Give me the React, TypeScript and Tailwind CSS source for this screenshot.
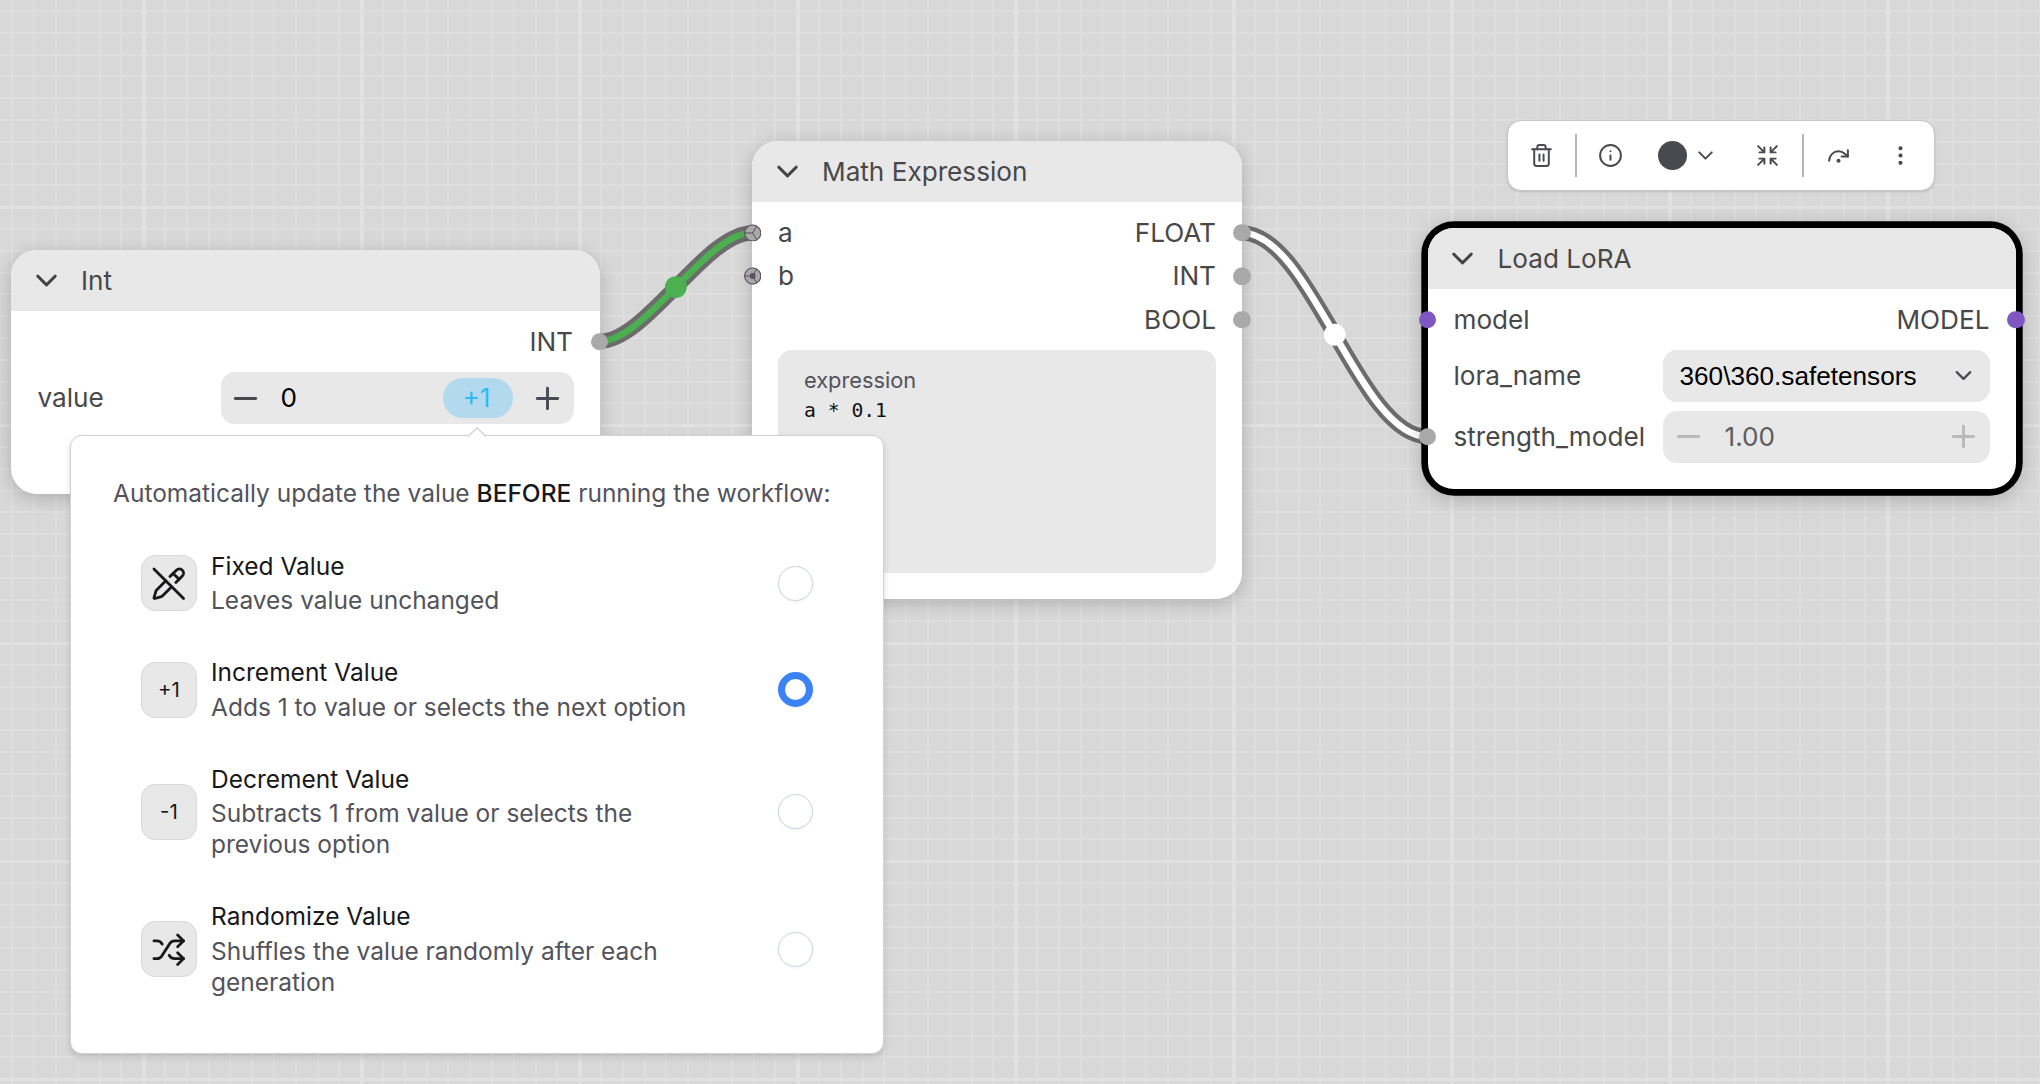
import React from 'react';
import {
  ChevronDown,
  EllipsisVertical,
  Info,
  Minus,
  PencilOff,
  Plus,
  RedoDot,
  Shrink,
  Shuffle,
  Trash2,
} from 'lucide-react';

interface Point {
  x: number;
  y: number;
}

interface SlotProps {
  side: 'left' | 'right';
  color?: string;
}

interface ModeOption {
  id: string;
  icon: React.ReactNode;
  title: string;
  description: React.ReactNode;
}

const GRID_STEP = 21.8;
const MAJOR_STEP = 218;

const range = (n: number) => Array.from({ length: n }, (_, i) => i);

const CanvasGrid: React.FC = () => (
  <svg className="absolute inset-0" width="2040" height="1084" shapeRendering="crispEdges">
    {range(95).map(i => (
      <rect key={`v${i}`} x={Math.round(11.4 + i * GRID_STEP)} y={0} width={2} height={1084} fill="#dedede" />
    ))}
    {range(51).map(i => (
      <rect key={`h${i}`} x={0} y={Math.round(10 + i * GRID_STEP)} width={2040} height={2} fill="#dedede" />
    ))}
    {range(9).map(i => (
      <rect key={`V${i}`} x={142 + i * MAJOR_STEP} y={0} width={4} height={1084} fill="#e1e1e1" />
    ))}
    {range(5).map(i => (
      <rect key={`H${i}`} x={0} y={206 + i * MAJOR_STEP} width={2040} height={3} fill="#e1e1e1" />
    ))}
  </svg>
);

const Link: React.FC<{ from: Point; to: Point; color: string }> = ({ from, to, color }) => {
  const offset = Math.hypot(to.x - from.x, to.y - from.y) * 0.25;
  const d = `M${from.x} ${from.y}C${from.x + offset} ${from.y} ${to.x - offset} ${to.y} ${to.x} ${to.y}`;
  return (
    <g fill="none">
      <path d={d} stroke="#6c6c6c" strokeWidth={15.2} />
      <path d={d} stroke={color} strokeWidth={6.6} />
      <circle cx={(from.x + to.x) / 2} cy={(from.y + to.y) / 2} r={10.9} fill={color} />
    </g>
  );
};

const Slot: React.FC<SlotProps> = ({ side, color = 'bg-[#a9a9a9]' }) => (
  <span
    className={`absolute top-1/2 size-[17.4px] -translate-y-1/2 rounded-full ${color} ${
      side === 'left' ? '-left-[8.7px]' : '-right-[8.7px]'
    }`}
  />
);

// Input that accepts several types, split into three sectors
const MultiSlot: React.FC<{ filled?: boolean }> = ({ filled }) => (
  <svg className="absolute top-1/2 -left-[8.5px] size-[17.4px] -translate-y-1/2" viewBox="0 0 17.4 17.4">
    <circle cx="8.7" cy="8.7" r="8.1" fill="#a9a9a9" stroke="#5b5165" strokeWidth="1.1" />
    <path d="M8.7 8.7H.8M8.7 8.7l3.9-6.8M8.7 8.7l3.9 6.8" stroke="#4a4452" strokeWidth="0.9" />
    {filled && <circle cx="8.7" cy="8.7" r="2.9" fill="#5b5165" />}
  </svg>
);

const NodeHeader: React.FC<{ title: string }> = ({ title }) => (
  <div className="flex h-[61px] items-center gap-[17.5px] rounded-t-[26px] bg-[#e8e8e8] pl-[17.5px]">
    <ChevronDown size={35} strokeWidth={2} className="text-[#444444]" />
    <span className="pt-px">{title}</span>
  </div>
);

const Toolbar: React.FC = () => (
  <div className="absolute top-[120px] left-[1507px] flex h-[71px] w-[428px] items-center rounded-[14px] border border-[#c6c6c6] bg-white pl-[21px] text-[#494a50] shadow-sm">
    <Trash2 size={25} strokeWidth={1.9} />
    <span className="ml-[21px] h-[43px] w-[2px] bg-[#b6b6b6]" />
    <Info size={25} strokeWidth={1.9} className="ml-[21px]" />
    <span className="ml-[35px] size-[28.5px] rounded-full bg-[#494a50]" />
    <ChevronDown size={25} strokeWidth={1.9} className="ml-[6px]" />
    <Shrink size={25} strokeWidth={1.9} className="ml-[37px]" />
    <span className="ml-[22px] h-[43px] w-[2px] bg-[#b6b6b6]" />
    <RedoDot size={25} strokeWidth={1.9} className="ml-[22.5px]" />
    <EllipsisVertical size={25} strokeWidth={2} className="ml-[36.5px]" />
  </div>
);

const IntNode: React.FC = () => (
  <div className="absolute top-[249.5px] left-[11px] h-[244px] w-[588.5px] rounded-[26px] bg-white shadow-[0_4px_18px_rgba(0,0,0,0.2)]">
    <NodeHeader title="Int" />
    <div className="relative mt-[9.5px] flex h-[43.6px] items-center justify-end pr-[26.5px]">
      <span className="pt-px">INT</span>
      <Slot side="right" />
    </div>
    <div className="mt-[8.5px] flex items-center justify-between pr-[25.5px] pl-[26.5px]">
      <span>value</span>
      <div className="flex h-[52px] w-[353.5px] items-center rounded-[14px] bg-[#e8e8e8] pl-[7.5px] text-black">
        <Minus size={35} strokeWidth={2} className="text-[#494a50]" />
        <span className="ml-[17.5px]">0</span>
        <span className="ml-auto flex h-10 w-[70px] items-center justify-center rounded-[20px] bg-[#b2d9ee] pr-[3px] text-[#31b9f4]">
          +1
        </span>
        <Plus size={35} strokeWidth={2} className="mr-[9px] ml-[17px] text-[#494a50]" />
      </div>
    </div>
  </div>
);

const MathNode: React.FC = () => (
  <div className="absolute top-[141px] left-[752px] h-[458px] w-[490px] rounded-[26px] bg-white shadow-[0_4px_18px_rgba(0,0,0,0.2)]">
    <NodeHeader title="Math Expression" />
    <div className="mt-[9px]">
      <div className="relative flex h-[43.6px] items-center justify-between pr-[26px] pl-[26px]">
        <MultiSlot />
        <span>a</span>
        <span>FLOAT</span>
        <Slot side="right" />
      </div>
      <div className="relative flex h-[43.6px] items-center justify-between pr-[26px] pl-[26px]">
        <MultiSlot filled />
        <span>b</span>
        <span>INT</span>
        <Slot side="right" />
      </div>
      <div className="relative flex h-[43.6px] items-center justify-end pr-[26px]">
        <span>BOOL</span>
        <Slot side="right" />
      </div>
    </div>
    <div className="mx-[26px] mt-[8px] h-[223px] rounded-[14px] bg-[#e8e8e8] px-[26px] pt-[16px]">
      <div className="text-[21.8px] leading-[28px] text-[#53535b]">expression</div>
      <div className="pt-[2px] font-['DejaVu_Sans_Mono',monospace] text-[19.7px] leading-[29px] text-[#111111]">
        a * 0.1
      </div>
    </div>
  </div>
);

const LoraNode: React.FC = () => (
  <div className="absolute top-[228px] left-[1427.5px] h-[261px] w-[588.5px] rounded-[26px] bg-white shadow-[0_0_0_6.7px_#000,0_4px_20px_6px_rgba(0,0,0,0.2)]">
    <NodeHeader title="Load LoRA" />
    <div className="relative mt-[9px] flex h-[43.6px] items-center justify-between pr-[26.5px] pl-[26px]">
      <Slot side="left" color="bg-[#7e57c2]" />
      <span>model</span>
      <span>MODEL</span>
      <Slot side="right" color="bg-[#7e57c2]" />
    </div>
    <div className="mt-[8px] flex items-center justify-between px-[26px]">
      <span>lora_name</span>
      <div className="flex h-[52px] w-[327.5px] items-center justify-between rounded-[14px] bg-[#e8e8e8] pr-[13px] pl-[17px] text-black">
        <span className="font-['Liberation_Sans',Arial,sans-serif]">360\360.safetensors</span>
        <ChevronDown size={27} strokeWidth={2} className="text-[#494a50]" />
      </div>
    </div>
    <div className="relative mt-[9px] flex items-center justify-between px-[26px]">
      <Slot side="left" />
      <span>strength_model</span>
      <div className="flex h-[52px] w-[327.5px] items-center rounded-[14px] bg-[#e8e8e8] pr-[9px] pl-[8px] text-[#5d5d5d]">
        <Minus size={35} strokeWidth={2} className="text-[#b9b9b9]" />
        <span className="ml-[19px]">1.00</span>
        <Plus size={35} strokeWidth={2} className="ml-auto text-[#b9b9b9]" />
      </div>
    </div>
  </div>
);

const OPTIONS: ModeOption[] = [
  {
    id: 'fixed',
    icon: <PencilOff size={35.5} strokeWidth={1.9} />,
    title: 'Fixed Value',
    description: 'Leaves value unchanged',
  },
  {
    id: 'increment',
    icon: '+1',
    title: 'Increment Value',
    description: 'Adds 1 to value or selects the next option',
  },
  {
    id: 'decrement',
    icon: '-1',
    title: 'Decrement Value',
    description: <>Subtracts 1 from value or selects the<br />previous option</>,
  },
  {
    id: 'randomize',
    icon: <Shuffle size={35.5} strokeWidth={1.9} />,
    title: 'Randomize Value',
    description: <>Shuffles the value randomly after each<br />generation</>,
  },
];

const ValueControlPopover: React.FC = () => {
  const [selected, setSelected] = React.useState('increment');

  return (
    <div className="absolute top-[435px] left-[70px] h-[619px] w-[814px] rounded-[12px] border border-[#d2d2d4] bg-white pt-[42px] text-[24.5px] leading-[31px] text-[#53535b] shadow-[0_3px_6px_rgba(0,0,0,0.14)]">
      <svg className="absolute -top-[9px] left-[395px]" width="22" height="11" viewBox="0 0 22 11">
        <path d="M2 10 11 1l9 9v1H2z" fill="#ffffff" />
        <path d="M2 9.6 11 1l9 8.6" fill="none" stroke="#d2d2d4" strokeWidth="1.4" />
      </svg>
      <p className="pl-[42px] whitespace-nowrap">
        Automatically update the value <span className="font-medium text-[#18181b]">BEFORE</span> running the workflow:
      </p>
      <div className="mt-[41.5px] flex flex-col gap-[41px] pr-[70px] pl-[70px]">
        {OPTIONS.map(option => (
          <div key={option.id} className="flex items-center" onClick={() => setSelected(option.id)}>
            <div className="flex size-14 shrink-0 items-center justify-center rounded-[14px] border border-[#d9d9db] bg-[#e8e8e8] text-[20.5px] text-[#18181b]">
              {option.icon}
            </div>
            <div className="ml-[14px] flex-1 whitespace-nowrap">
              <div className="mb-[3.5px] text-[#18181b]">{option.title}</div>
              <div>{option.description}</div>
            </div>
            <span
              className={`size-[35px] rounded-full bg-white shadow-[0_1px_3px_rgba(0,0,0,0.06)] ${
                selected === option.id ? 'border-[7px] border-[#3b82f6]' : 'border border-[#cbd5e1]'
              }`}
            />
          </div>
        ))}
      </div>
    </div>
  );
};

export default function App() {
  return (
    <div className="relative h-[1084px] w-[2040px] overflow-hidden bg-[#d8d8d8] font-['Inter',sans-serif] text-[26.16px] leading-[32px] text-[#484848]">
      <CanvasGrid />
      <svg className="absolute inset-0" width="2040" height="1084">
        <Link from={{ x: 599.5, y: 341.3 }} to={{ x: 752.3, y: 232.8 }} color="#4caf50" />
        <Link from={{ x: 1241.8, y: 232.8 }} to={{ x: 1427.7, y: 436.7 }} color="#ffffff" />
      </svg>
      <IntNode />
      <MathNode />
      <LoraNode />
      <Toolbar />
      <ValueControlPopover />
    </div>
  );
}
